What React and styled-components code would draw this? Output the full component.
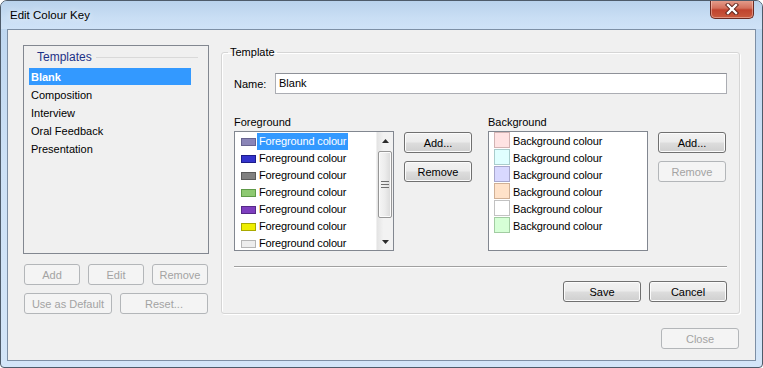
import styled, { createGlobalStyle } from 'styled-components';

const GlobalStyle = createGlobalStyle`
  html, body {
    margin: 0;
    padding: 0;
    width: 763px;
    height: 368px;
    overflow: hidden;
    background: #ffffff;
  }
  * {
    box-sizing: border-box;
  }
`;

const Window = styled.div`
  width: 763px;
  height: 368px;
  display: flex;
  flex-direction: column;
  border: 1px solid #4e5b6a;
  border-radius: 7px 7px 4px 4px;
  background: linear-gradient(180deg, #bcd5ef 0%, #cde1f6 45%, #d3e5f8 100%);
  font-family: 'Liberation Sans', Arial, sans-serif;
  font-size: 11px;
  color: #000;
  overflow: hidden;
`;

const TitleBar = styled.div`
  height: 28px;
  display: flex;
  justify-content: space-between;
  align-items: flex-start;
  padding-left: 9px;
  background: linear-gradient(180deg, #b9d2ec 0%, #c9def4 60%, #cfe2f7 100%);
`;

const Title = styled.div`
  line-height: 28px;
  font-size: 11.5px;
  text-shadow: 0 0 6px rgba(255, 255, 255, 0.9);
`;

const CloseX = styled.div`
  width: 44px;
  height: 19px;
  margin-right: 8px;
  margin-top: -1px;
  display: flex;
  align-items: center;
  justify-content: center;
  border: 1px solid #6b2a22;
  border-top: none;
  border-radius: 0 0 5px 5px;
  background: linear-gradient(180deg, #e6a190 0%, #d4705c 45%, #c0432e 55%, #c95a3e 100%);
  box-shadow: inset 0 0 0 1px rgba(255, 220, 210, 0.45);
`;

const Frame = styled.div`
  flex: 1;
  display: flex;
  padding: 0 6px 6px 6px;
`;

const Client = styled.div`
  flex: 1;
  display: flex;
  flex-direction: column;
  border: 1px solid #7d8fa5;
  background: #f0f0f0;
  padding: 15px 15px 10px 15px;
`;

const TopRow = styled.div`
  display: flex;
  gap: 12px;
  align-items: stretch;
`;

const LeftColumn = styled.div`
  width: 186px;
  display: flex;
  flex-direction: column;
`;

const TemplateList = styled.div`
  height: 209px;
  border: 1px solid #828790;
  background: #f0f0f0;
`;

const GroupHeader = styled.div`
  height: 22px;
  display: flex;
  align-items: center;
  padding-left: 13px;
  color: #1e3287;
  font-size: 12px;
`;

const HeaderLine = styled.div`
  flex: 1;
  height: 1px;
  background: #d9d9d9;
  margin: 0 10px 0 4px;
`;

const TemplateItem = styled.div`
  height: 17px;
  line-height: 19px;
  margin: 0 17px 1px 5px;
  padding-left: 2px;
  overflow: visible;
  background: ${(p) => (p.$selected ? '#3399ff' : 'transparent')};
  color: ${(p) => (p.$selected ? '#ffffff' : '#000000')};
  font-weight: ${(p) => (p.$selected ? 700 : 400)};
`;

const ButtonRow = styled.div`
  display: flex;
  gap: 8px;
  margin: ${(p) => p.$margin || '0'};
  justify-content: ${(p) => p.$justify || 'flex-start'};
`;

const Button = styled.button`
  width: ${(p) => p.$w}px;
  height: 21px;
  padding: 0;
  font-family: 'Liberation Sans', Arial, sans-serif;
  font-size: 11px;
  border-radius: 3px;
  border: 1px solid ${(p) => (p.disabled ? '#b3b6b9' : '#707070')};
  color: ${(p) => (p.disabled ? '#a3a3a3' : '#000000')};
  background: ${(p) =>
    p.disabled
      ? '#f4f4f4'
      : 'linear-gradient(180deg, #f2f2f2 0%, #ebebeb 48%, #dddddd 52%, #cfcfcf 100%)'};
  box-shadow: ${(p) => (p.disabled ? 'none' : 'inset 0 0 0 1px #fbfbfb')};
`;

const GroupBox = styled.fieldset`
  flex: 1;
  min-width: 0;
  margin: 0;
  padding: 0;
  border: 1px solid #d5d5d5;
  border-radius: 3px;
  box-shadow: inset 1px 1px 0 #ffffff, 1px 1px 0 #ffffff;
`;

const Legend = styled.legend`
  margin-left: 6px;
  padding: 0 2px;
  line-height: 14px;
  font-size: 11px;
`;

const GroupContent = styled.div`
  padding: 14px 12px 11px 12px;
  display: flex;
  flex-direction: column;
`;

const NameRow = styled.div`
  display: flex;
  align-items: center;
`;

const NameLabel = styled.label`
  width: 41px;
`;

const TextInput = styled.div`
  flex: 1;
  height: 21px;
  line-height: 19px;
  padding-left: 3px;
  border: 1px solid #abadb3;
  border-top-color: #8e9198;
  background: #ffffff;
`;

const ColoursRow = styled.div`
  display: flex;
  gap: 16px;
  margin-top: 22px;
`;

const ColourSection = styled.div`
  display: grid;
  grid-template-columns: 160px 68px;
  column-gap: 10px;
`;

const SectionLabel = styled.div`
  grid-column: 1 / 3;
  line-height: 13px;
  margin-bottom: 2px;
`;

const ColourList = styled.div`
  height: 120px;
  border: 1px solid #828790;
  background: #ffffff;
  display: flex;
  overflow: hidden;
`;

const ListItems = styled.div`
  flex: 1;
  padding-top: ${(p) => p.$top || 0}px;
`;

const ColourRow = styled.div`
  height: 17px;
  display: flex;
  align-items: ${(p) => p.$align || 'center'};
  padding-left: ${(p) => p.$indent}px;
  white-space: nowrap;
`;

const FgSwatch = styled.span`
  width: 15px;
  height: 8px;
  border: 1px solid ${(p) => p.$edge};
  background: ${(p) => p.$fill};
`;

const BgSwatch = styled.span`
  width: 16px;
  height: 16px;
  border: 1px solid ${(p) => p.$edge};
  background: ${(p) => p.$fill};
`;

const ItemText = styled.span`
  margin-left: ${(p) => p.$gap}px;
  margin-top: ${(p) => p.$drop || 0}px;
  padding: 0 2px;
  line-height: 17px;
  letter-spacing: -0.15px;
  background: ${(p) => (p.$selected ? '#3399ff' : 'transparent')};
  color: ${(p) => (p.$selected ? '#ffffff' : '#000000')};
`;

const ScrollBar = styled.div`
  width: 17px;
  display: flex;
  flex-direction: column;
  background: linear-gradient(90deg, #e3e3e3 0%, #f2f2f2 40%, #f2f2f2 100%);
  border-left: 1px solid #f0f0f0;
`;

const Arrow = styled.div`
  height: 17px;
  display: flex;
  align-items: center;
  justify-content: center;
`;

const Track = styled.div`
  flex: 1;
  padding: 0 1px;
`;

const Thumb = styled.div`
  height: 67px;
  border: 1px solid #979797;
  border-radius: 2px;
  background: linear-gradient(90deg, #f5f5f5 0%, #ececec 50%, #d9d9d9 100%);
  box-shadow: inset 0 0 0 1px #fbfbfb;
  display: flex;
  align-items: center;
  justify-content: center;
`;

const ButtonStack = styled.div`
  display: flex;
  flex-direction: column;
  gap: 8px;
  margin-top: 1px;
`;

const Separator = styled.div`
  margin-top: 15px;
  border-top: 1px solid #a0a0a0;
  border-bottom: 1px solid #ffffff;
`;

const foreground = [
  { fill: '#8a85b7', edge: '#67638f' },
  { fill: '#3333cc', edge: '#1c1c8a' },
  { fill: '#808080', edge: '#5a5a5a' },
  { fill: '#8dc971', edge: '#5f9a48' },
  { fill: '#7e3fbf', edge: '#562a88' },
  { fill: '#eeee00', edge: '#a9a900' },
  { fill: '#ededed', edge: '#b5b5b5' },
];

const background = [
  { fill: '#ffe3e3', edge: '#d2b3b3' },
  { fill: '#e0ffff', edge: '#a9cccc' },
  { fill: '#d8d8ff', edge: '#a7a7cc' },
  { fill: '#ffe2c9', edge: '#d0b096' },
  { fill: '#ffffff', edge: '#c2c2c2' },
  { fill: '#d6ffd6', edge: '#a2cca2' },
];

const templates = ['Blank', 'Composition', 'Interview', 'Oral Feedback', 'Presentation'];

function CloseGlyph() {
  return (
    <svg width="14" height="12" viewBox="0 0 14 12">
      <path d="M3 2 L11 10 M11 2 L3 10" stroke="#5a1f17" strokeWidth="4.2" strokeLinecap="square" />
      <path d="M3 2 L11 10 M11 2 L3 10" stroke="#ffffff" strokeWidth="2.4" strokeLinecap="square" />
    </svg>
  );
}

function ArrowGlyph({ up }) {
  return (
    <svg width="7" height="4" viewBox="0 0 7 4">
      <path d={up ? 'M0 4 L3.5 0 L7 4 Z' : 'M0 0 L3.5 4 L7 0 Z'} fill="#2b2b2b" />
    </svg>
  );
}

function Grip() {
  return (
    <svg width="8" height="7" viewBox="0 0 8 7">
      <path d="M0 0.5 H8 M0 3.5 H8 M0 6.5 H8" stroke="#6f6f6f" strokeWidth="1" />
    </svg>
  );
}

export default function App() {
  return (
    <>
      <GlobalStyle />
      <Window>
        <TitleBar>
          <Title>Edit Colour Key</Title>
          <CloseX>
            <CloseGlyph />
          </CloseX>
        </TitleBar>
        <Frame>
          <Client>
            <TopRow>
              <LeftColumn>
                <TemplateList>
                  <GroupHeader>
                    Templates
                    <HeaderLine />
                  </GroupHeader>
                  {templates.map((t, i) => (
                    <TemplateItem key={t} $selected={i === 0}>
                      {t}
                    </TemplateItem>
                  ))}
                </TemplateList>
                <ButtonRow $margin="10px 0 0 1px">
                  <Button $w={56} disabled>Add</Button>
                  <Button $w={56} disabled>Edit</Button>
                  <Button $w={56} disabled>Remove</Button>
                </ButtonRow>
                <ButtonRow $margin="8px 0 0 1px">
                  <Button $w={88} disabled>Use as Default</Button>
                  <Button $w={88} disabled>Reset...</Button>
                </ButtonRow>
              </LeftColumn>

              <GroupBox>
                <Legend>Template</Legend>
                <GroupContent>
                  <NameRow>
                    <NameLabel>Name:</NameLabel>
                    <TextInput>Blank</TextInput>
                  </NameRow>

                  <ColoursRow>
                    <ColourSection>
                      <SectionLabel>Foreground</SectionLabel>
                      <ColourList>
                        <ListItems $top={1}>
                          {foreground.map((c, i) => (
                            <ColourRow key={i} $indent={6}>
                              <FgSwatch $fill={c.fill} $edge={c.edge} />
                              <ItemText $gap={1} $selected={i === 0}>
                                Foreground colour
                              </ItemText>
                            </ColourRow>
                          ))}
                        </ListItems>
                        <ScrollBar>
                          <Arrow>
                            <ArrowGlyph up />
                          </Arrow>
                          <Track>
                            <Thumb style={{ marginTop: 2 }}>
                              <Grip />
                            </Thumb>
                          </Track>
                          <Arrow>
                            <ArrowGlyph />
                          </Arrow>
                        </ScrollBar>
                      </ColourList>
                      <ButtonStack>
                        <Button $w={68}>Add...</Button>
                        <Button $w={68}>Remove</Button>
                      </ButtonStack>
                    </ColourSection>

                    <ColourSection>
                      <SectionLabel>Background</SectionLabel>
                      <ColourList>
                        <ListItems>
                          {background.map((c, i) => (
                            <ColourRow key={i} $indent={5} $align="flex-start">
                              <BgSwatch $fill={c.fill} $edge={c.edge} />
                              <ItemText $gap={1} $drop={1}>Background colour</ItemText>
                            </ColourRow>
                          ))}
                        </ListItems>
                      </ColourList>
                      <ButtonStack>
                        <Button $w={68}>Add...</Button>
                        <Button $w={68} disabled>Remove</Button>
                      </ButtonStack>
                    </ColourSection>
                  </ColoursRow>

                  <Separator />

                  <ButtonRow $margin="13px 0 0 0" $justify="flex-end">
                    <Button $w={78}>Save</Button>
                    <Button $w={78}>Cancel</Button>
                  </ButtonRow>
                </GroupContent>
              </GroupBox>
            </TopRow>

            <ButtonRow $margin="14px 1px 0 0" $justify="flex-end">
              <Button $w={78} disabled>Close</Button>
            </ButtonRow>
          </Client>
        </Frame>
      </Window>
    </>
  );
}
